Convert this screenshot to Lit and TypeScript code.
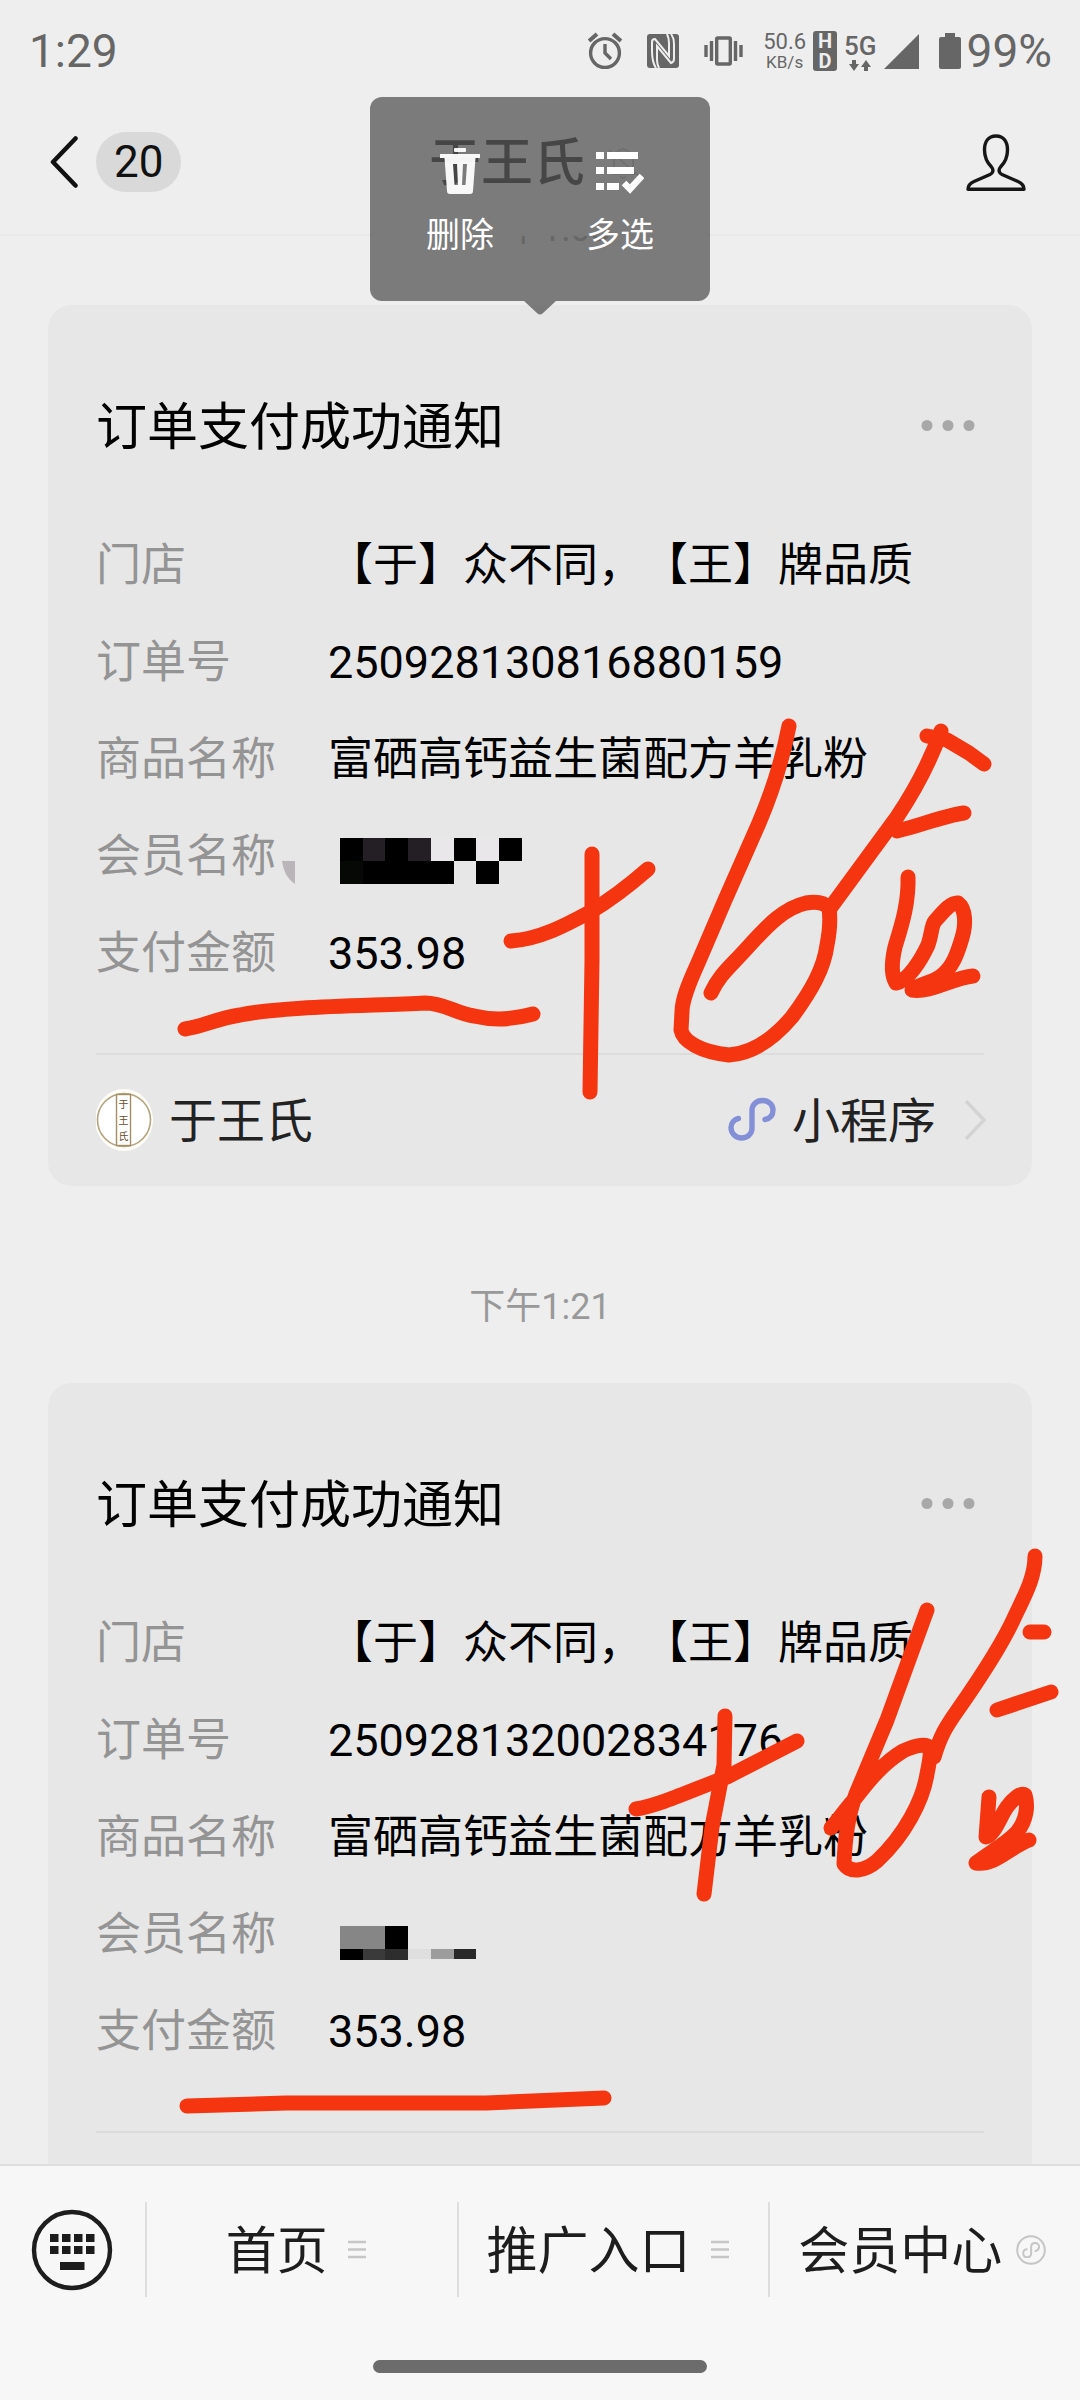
import { LitElement, html, svg, css, nothing } from "lit";
import { customElement, property } from "lit/decorators.js";

interface Block {
  x: number;
  y: number;
  w: number;
  h: number;
  fill: string;
}

interface Order {
  id: string;
  amount: string;
  time: string;
  mask: Block[];
  smudge: boolean;
}

const CELL = 22.7;

const ORDERS: Order[] = [
  {
    id: "250928130816880159",
    amount: "353.98",
    time: "下午1:08",
    smudge: true,
    mask: [
      { x: 0, y: 30, w: 8, h: 23, fill: "#eae7ea" },
      { x: 0, y: 30, w: 4, h: 23, fill: "#000" },
      { x: 1, y: 30, w: 1, h: 23, fill: "#231f24" },
      { x: 3, y: 30, w: 1, h: 23, fill: "#231f24" },
      { x: 5, y: 30, w: 1, h: 23, fill: "#000" },
      { x: 7, y: 30, w: 1, h: 23, fill: "#000" },
      { x: 0, y: 53, w: 5, h: 23, fill: "#000" },
      { x: 0, y: 53, w: 1, h: 23, fill: "#060806" },
      { x: 6, y: 53, w: 1, h: 23, fill: "#000" },
    ],
  },
  {
    id: "250928132002834176",
    amount: "353.98",
    time: "下午1:21",
    smudge: false,
    mask: [
      { x: 0, y: 40, w: 2, h: 23, fill: "#868686" },
      { x: 2, y: 40, w: 1, h: 23, fill: "#000" },
      { x: 0, y: 63, w: 1, h: 11, fill: "#000" },
      { x: 1, y: 63, w: 1, h: 11, fill: "#3a3a3a" },
      { x: 2, y: 63, w: 1, h: 11, fill: "#2d2d2d" },
      { x: 3, y: 63, w: 1, h: 10, fill: "#dfdfdf" },
      { x: 4, y: 63, w: 1, h: 10, fill: "#9d9d9d" },
      { x: 5, y: 63, w: 1, h: 10, fill: "#292929" },
    ],
  },
];

const base = css`
  * {
    box-sizing: border-box;
  }
  button,
  a {
    font: inherit;
    color: inherit;
    background: none;
    border: 0;
    padding: 0;
    margin: 0;
    text-decoration: none;
  }
  svg {
    display: block;
    flex: none;
  }
  .text {
    padding-top: 4px;
  }
`;

/* The mini-program "S" mark in the menu. */
const miniMark = svg`<path d="M12 20 C5 21 2 26 2 31 C2 38 7 42 13 42 C20 42 24 37 24 31 L24 14 C24 7 28 3 35 3 C41 3 46 7 46 13 C46 19 42 23 36 25"/>`;

@customElement("status-bar")
export class StatusBar extends LitElement {
  static styles = [
    base,
    css`
      :host {
        display: flex;
        justify-content: space-between;
        align-items: center;
        height: 90px;
        padding: 12px 28px 0 29px;
        color: #666;
        font-size: 46px;
        line-height: 54px;
      }
      .right,
      .group {
        display: flex;
        align-items: center;
      }
      .right {
        gap: 20px;
      }
      .icons {
        gap: 25px;
      }
      .net {
        gap: 7px;
      }
      .power {
        gap: 6px;
      }
      .speed {
        text-align: center;
        font-size: 22px;
        line-height: 22px;
      }
      .unit {
        font-size: 17px;
        line-height: 18px;
      }
      .hd {
        width: 24px;
        border-radius: 3px;
        background: #666;
        color: #eee;
        text-align: center;
        font-size: 20px;
        line-height: 20px;
        font-weight: 700;
      }
      .gen {
        display: flex;
        flex-direction: column;
        align-items: center;
        font-size: 26px;
        line-height: 28px;
        font-weight: 500;
      }
    `,
  ];

  render() {
    return html`
      <span>1:29</span>
      <div class="right">
        <div class="group icons">
          <svg width="34" height="38" viewBox="0 0 34 38" fill="none" stroke="#666" stroke-width="3.4">
            <circle cx="17" cy="21" r="14.4" />
            <path d="M17 12v9l6 6" />
            <path d="M1 9l8-7M33 9l-8-7" stroke-width="4" />
          </svg>
          <svg width="32" height="34" viewBox="0 0 32 34">
            <rect width="32" height="34" rx="3" fill="#666" />
            <path d="M9 34Q5 28 5 17V8Q5 5 8 5L22 22V9Q22 4 20 0" fill="none" stroke="#eee" stroke-width="2" />
            <path d="M12 34Q10 30 10 26V12L24 29Q27 28 27 25V10Q27 4 24 0" fill="none" stroke="#eee" stroke-width="2" />
          </svg>
          <svg width="39" height="30" viewBox="0 0 39 30" fill="none" stroke="#666" stroke-width="3.4">
            <rect x="12.7" y="2" width="13.6" height="26" rx="1" />
            <path d="M7.5 5v20M31.500 5v20M2 9v12M37 9v12" />
          </svg>
        </div>
        <div class="group net">
          <div class="speed">
            <div>50.6</div>
            <div class="unit">KB/s</div>
          </div>
          <div class="hd"><div>H</div><div>D</div></div>
          <div class="gen">
            <span>5G</span>
            <svg width="22" height="11" viewBox="0 0 22 11" fill="#666">
              <path d="M3 0h4v4H10L5 11 0 4h3zM15 11h4V7h3L17 0l-5 7h3z" />
            </svg>
          </div>
          <svg width="35" height="35" viewBox="0 0 35 35" fill="#666"><path d="M35 0v35H0z" /></svg>
        </div>
        <div class="group power">
          <svg width="22" height="36" viewBox="0 0 22 36" fill="#666">
            <path d="M6 0h10v4h4q2 0 2 2v28q0 2-2 2H2q-2 0-2-2V6q0-2 2-2h4z" />
          </svg>
          <span>99%</span>
        </div>
      </div>
    `;
  }
}

@customElement("chat-header")
export class ChatHeader extends LitElement {
  static styles = [
    base,
    css`
      :host {
        display: grid;
        grid-template-columns: 1fr auto 1fr;
        align-items: center;
        height: 146px;
        padding: 0 54px 0 50px;
        border-bottom: 2px solid #e9e9e9;
        color: #111;
      }
      .back {
        display: flex;
        align-items: center;
        gap: 18px;
        justify-self: start;
      }
      .count {
        padding: 0 18px;
        border-radius: 30px;
        background: #d9d9d9;
        font-size: 44px;
        line-height: 60px;
      }
      .name {
        display: flex;
        align-items: center;
        gap: 22px;
      }
      .title {
        margin: 0;
        font-size: 52px;
        line-height: 60px;
        font-weight: 500;
      }
      .profile {
        justify-self: end;
      }
    `,
  ];

  render() {
    return html`
      <button class="back" aria-label="返回">
        <svg width="28" height="52" viewBox="0 0 28 52" fill="none" stroke="#111" stroke-width="4.500" stroke-linecap="round" stroke-linejoin="round">
          <path d="M25.500 2.500L3 26l22.500 23.500" />
        </svg>
        <span class="count">20</span>
      </button>
      <div class="name">
        <h1 class="title text">于王氏</h1>
        <svg width="40" height="40" viewBox="0 0 40 40" fill="none" stroke="#c2c2c2" stroke-width="2">
          <path d="M6 32h22M7 31V18q0-9 9-11 9 2 10 11v13M13 34q3 4 6 0M2 8l30 26" />
        </svg>
      </div>
      <button class="profile" aria-label="资料">
        <svg width="60" height="57" viewBox="0 0 60 57" fill="none" stroke="#161616" stroke-width="3.400" stroke-linejoin="round">
          <path d="M30 2C22 2 18.500 8 18.500 16C18.500 24 21.500 29 25.500 33C28 36 27 39 24 40.500L8 47.500C3.500 49.500 2 52 2 55.200H58C58 52 56.500 49.500 52 47.500L36 40.500C33 39 32 36 34.500 33C38.500 29 41.500 24 41.500 16C41.500 8 38 2 30 2Z" />
        </svg>
      </button>
    `;
  }
}

@customElement("action-popup")
export class ActionPopup extends LitElement {
  static styles = [
    base,
    css`
      :host {
        display: flex;
        justify-content: center;
        gap: 92px;
        width: 340px;
        height: 204px;
        padding-top: 48px;
        border-radius: 12px;
        background: rgba(87, 87, 87, 0.76);
        color: #fff;
      }
      .tail {
        position: absolute;
        top: 100%;
        left: 50%;
        margin-left: -16px;
      }
      .action {
        display: flex;
        flex-direction: column;
        align-items: center;
        gap: 18px;
        height: 110px;
        white-space: nowrap;
        font-size: 34px;
        line-height: 40px;
      }
    `,
  ];

  render() {
    return html`
      <button class="action">
        <svg width="48" height="52" viewBox="0 0 48 52" fill="#fff" fill-opacity="0.95">
          <rect x="18" y="3" width="12" height="4" rx="1" />
          <rect x="4" y="9" width="40" height="4" />
          <path fill-rule="evenodd" d="M8.500 13H39.500L37 46q0 3-3 3H14q-3 0-3-3zM17 19l1.500 21H22L21 19zM27 19l-1 21h3.500L31 19z" />
        </svg>
        删除
      </button>
      <button class="action">
        <svg width="48" height="52" viewBox="0 0 48 52" fill="#fff">
          <path d="M0 7h8v7H0zM11 7h31v7H11zM0 22h8v7H0zM11 22h27v7H11zM0 38h8v7H0zM11 38h12v7H11z" />
          <path d="M28 38l6 6 12-13" fill="none" stroke="#fff" stroke-width="6.500" />
        </svg>
        多选
      </button>
      <svg class="tail" width="32" height="14" viewBox="0 0 32 14">
        <path d="M0 0H32L19 12Q16 15 13 12Z" fill="#575757" fill-opacity="0.76" />
      </svg>
    `;
  }
}

@customElement("order-card")
export class OrderCard extends LitElement {
  @property({ attribute: false }) order!: Order;

  static styles = [
    base,
    css`
      :host {
        display: block;
        flex: none;
        margin: 0 48px;
        padding: 93px 48px 0;
        border-radius: 24px;
        background: #e7e7e7;
        color: #000;
      }
      .head {
        display: flex;
        justify-content: space-between;
        align-items: center;
        padding-right: 8px;
        height: 60px;
      }
      .title {
        margin: 0;
        font-size: 51px;
        line-height: 60px;
        font-weight: 400;
      }
      .rows {
        margin: 59px 0 51px;
        font-size: 45px;
        line-height: 97px;
      }
      .row {
        display: grid;
        grid-template-columns: 232px 1fr;
        height: 97px;
      }
      .label {
        display: flex;
        color: #949494;
      }
      .value {
        margin: 0;
        white-space: nowrap;
        text-spacing-trim: space-all;
      }
      .mask {
        margin-left: 12px;
      }
      .foot {
        display: flex;
        align-items: center;
        height: 133px;
        margin-right: -4px;
        font-size: 48px;
        line-height: 60px;
        color: #222;
      }
      .rule {
        height: 2px;
        margin: 0 0 -2px;
        border: 0;
        background: #dcdcdc;
      }
      .brand,
      .mini {
        display: flex;
        align-items: center;
        gap: 16px;
      }
      .brand {
        margin-right: auto;
      }
      .arrow {
        margin-left: 12px;
      }
      .seal {
        font-size: 10px;
      }
    `,
  ];

  private row(label: string, value: unknown, extra: unknown = nothing) {
    return html`<div class="row">
      <dt class="label">${label}${extra}</dt>
      <dd class="value">${value}</dd>
    </div>`;
  }

  render() {
    const o = this.order;
    const mask = html`<svg class="mask" width="184" height="97" viewBox="0 0 184 97" shape-rendering="crispEdges">
      ${o.mask.map((b) => svg`<rect x=${b.x * CELL} y=${b.y} width=${b.w * CELL} height=${b.h} fill=${b.fill}></rect>`)}
    </svg>`;
    const smudge = o.smudge
      ? html`<svg width="24" height="97" viewBox="0 0 24 97"><path d="M6 53H19V76Q8 69 6 53Z" fill="#b9b5b9" /></svg>`
      : nothing;
    return html`
      <div class="head">
        <h2 class="title">订单支付成功通知</h2>
        <button aria-label="更多">
          <svg width="56" height="20" viewBox="0 0 56 20" fill="#a8a8a8">
            <circle cx="7" cy="7.500" r="5.500" /><circle cx="28" cy="7.500" r="5.500" /><circle cx="49" cy="7.500" r="5.500" />
          </svg>
        </button>
      </div>
      <dl class="rows">
        ${this.row("门店", "【于】众不同，【王】牌品质")}
        ${this.row("订单号", o.id)}
        ${this.row("商品名称", "富硒高钙益生菌配方羊乳粉")}
        ${this.row("会员名称", mask, smudge)}
        ${this.row("支付金额", o.amount)}
      </dl>
      <hr class="rule" />
      <div class="foot">
        <a class="brand" href="#brand">
          <svg width="57" height="62" viewBox="0 0 57 62">
            <ellipse cx="28" cy="31" rx="29" ry="31" fill="#fffdf8" />
            <ellipse cx="28" cy="31" rx="26.500" ry="26.500" fill="#fff" stroke="#b5a27e" stroke-width="1.600" />
            <rect x="20.500" y="5.500" width="14" height="51" fill="#fff" stroke="#a58d63" stroke-width="1.400" />
            <g class="seal" fill="#6a4a28" text-anchor="middle">
              <text x="27.500" y="19">于</text>
              <text x="27.500" y="35">王</text>
              <text x="27.500" y="51">氏</text>
            </g>
          </svg>
          <span class="text">于王氏</span>
        </a>
        <a class="mini" href="#mini">
          <svg width="48" height="45" viewBox="0 0 48 45" fill="none" stroke="#8390d8" stroke-width="5.400" stroke-linecap="round">
            <path d="M10.500 21.500C6 22.500 3 26 3 30.500C3 36.500 8 41 13.500 41C19.500 41 24 37 24 31V13.500C24 7.500 28.500 3.500 34.500 3.500C40.500 3.500 45 7.500 45 13C45 18 42 21.500 37 22.500" />
          </svg>
          <span class="text">小程序</span>
          <svg class="arrow" width="24" height="44" viewBox="0 0 24 44" fill="none" stroke="#d3d3d3" stroke-width="3.400">
            <path d="M2 3l18 19L2 41" />
          </svg>
        </a>
      </div>
    `;
  }
}

@customElement("menu-bar")
export class MenuBar extends LitElement {
  static styles = [
    base,
    css`
      :host {
        display: flex;
        flex-direction: column;
        flex: none;
        align-items: center;
        height: 236px;
        padding: 36px 0 27px;
        border-top: 2px solid #dedede;
        background: #f7f7f7;
        color: #1d1d1d;
      }
      .items {
        display: flex;
        align-self: stretch;
        height: 95px;
        margin-bottom: auto;
      }
      .keyboard {
        display: flex;
        flex: none;
        align-items: center;
        justify-content: center;
        width: 145px;
        padding-right: 2px;
      }
      .item {
        display: flex;
        flex: 1;
        align-items: center;
        justify-content: center;
        gap: 14px;
        padding-right: 6px;
        border-left: 2px solid #dedede;
        font-size: 51px;
        line-height: 60px;
        white-space: nowrap;
      }
      .home {
        width: 31%;
        height: 13px;
        border-radius: 7px;
        background: #6c6c6c;
      }
    `,
  ];

  render() {
    const lines = html`<svg width="30" height="30" viewBox="0 0 30 30" stroke="#c6c6c6" stroke-width="2.400">
      <path d="M6 7h18M6 14.500h18M6 22h18" />
    </svg>`;
    const mini = html`<svg width="30" height="30" viewBox="0 0 30 30" fill="none" stroke="#c6c6c6" stroke-width="2">
      <circle cx="15" cy="15" r="13.800" />
      <g transform="translate(6.500 7) scale(.36)" stroke-width="5.500" stroke-linecap="round">${miniMark}</g>
    </svg>`;
    return html`
      <nav class="items">
        <button class="keyboard" aria-label="键盘">
          <svg width="82" height="82" viewBox="0 0 82 82" fill="#1d1d1d">
            <circle cx="41" cy="41" r="38" fill="none" stroke="#1d1d1d" stroke-width="4.400" />
            ${[19, 31, 43, 55].map(
              (x) => svg`<rect x=${x} y="25" width="8.500" height="8"></rect><rect x=${x} y="37" width="8.500" height="8"></rect>`
            )}
            <rect x="29" y="53" width="24.500" height="8" />
          </svg>
        </button>
        <button class="item"><span class="text">首页</span>${lines}</button>
        <button class="item"><span class="text">推广入口</span>${lines}</button>
        <button class="item"><span class="text">会员中心</span>${mini}</button>
      </nav>
      <div class="home"></div>
    `;
  }
}

@customElement("app-root")
export class AppRoot extends LitElement {
  static styles = [
    base,
    css`
      :host {
        position: relative;
        display: flex;
        flex-direction: column;
        height: 100vh;
        overflow: hidden;
        background: #eee;
        font-family: Roboto, "Noto Sans CJK SC", sans-serif;
      }
      .chat {
        flex: 1;
        min-height: 0;
        overflow: hidden;
      }
      .list {
        display: flex;
        flex-direction: column;
        margin-top: -128px;
      }
      .time {
        padding: 100px 0 55px;
        text-align: center;
        font-size: 36px;
        line-height: 42px;
        color: #999;
      }
      .popup {
        position: absolute;
        top: 97px;
        left: 50%;
        margin-left: -170px;
      }
      .ink {
        position: absolute;
        top: 0;
        left: 0;
        width: 100%;
        pointer-events: none;
      }
    `,
  ];

  render() {
    return html`
      <status-bar></status-bar>
      <chat-header></chat-header>
      <main class="chat">
        <div class="list">
          ${ORDERS.map(
            (o) => html`
              <div class="time">${o.time}</div>
              <order-card .order=${o}></order-card>
            `
          )}
        </div>
      </main>
      <menu-bar></menu-bar>
      <action-popup class="popup"></action-popup>
      <svg class="ink" viewBox="0 0 1080 2400" fill="none" stroke="#f5350f" stroke-width="15" stroke-linecap="round" stroke-linejoin="round">
        <path d="M185 1029C205 1026 215 1019 240 1015C285 1006 370 1006 425 1003C444 1003 455 1013 474 1016C495 1021 515 1019 533 1014" />
        <path d="M592 854L592 960L590 1092" />
        <path d="M511 941C540 939 566 925 590 912C612 899 632 883 648 869" />
        <path d="M789 726C783 757 773 790 759 823L725 900L698 963C688 985 682 1000 682 1012L681 1030C683 1041 700 1052 729 1055C756 1053 776 1036 792 1017C812 990 824 968 827 945C831 925 830 915 829 908C823 901 812 902 806 903C784 908 768 925 748 947C730 967 719 975 711 993" />
        <path d="M831 907L897 817C915 790 930 762 941 731" />
        <path d="M927 736L947 740L969 753L984 764" />
        <path d="M964 813C942 816 920 826 897 831" />
        <path d="M908 877C909 905 900 930 895 947C892 960 891 975 896 983C908 981 921 960 928 945C932 934 931 926 935 921C943 912 951 902 958 903C966 909 966 925 962 938C957 955 952 968 941 976C930 984 918 984 912 990C930 993 953 978 973 976" />
        <path d="M725 1716L724 1765L712 1827L704 1894" />
        <path d="M636 1809C660 1805 690 1791 727 1777L797 1741" />
        <path d="M927 1610L887 1720L856 1794C849 1812 845 1835 844 1864C850 1873 864 1872 877 1861C905 1835 923 1800 927 1774C930 1760 931 1753 930 1748C925 1742 912 1747 903 1751C880 1765 866 1785 853 1801C845 1810 838 1820 831 1828" />
        <path d="M934 1757C940 1737 945 1728 957 1711C985 1671 1003 1643 1015 1616C1025 1595 1035 1577 1035 1556" />
        <path d="M1030 1632L1044 1632" />
        <path d="M997 1710L1051 1692" />
        <path d="M989 1797L986 1837C995 1834 1001 1815 1007 1807C1013 1799 1021 1792 1025 1795C1028 1805 1027 1820 1017 1832C1006 1844 990 1852 976 1863C995 1866 1010 1847 1029 1840" />
        <path d="M187 2106L286 2103L486 2103L604 2098" />
      </svg>
    `;
  }
}
